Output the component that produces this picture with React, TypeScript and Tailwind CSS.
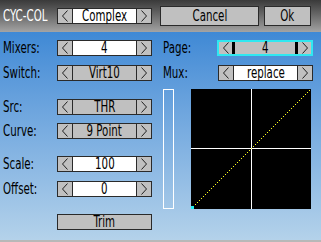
import React from 'react'
import clsx from 'clsx'

const font = { fontFamily: '"DejaVu Sans Condensed", "DejaVu Sans", sans-serif' }

// narrow bitmap-like text: condensed face squeezed horizontally
function Txt({ children, left }: { children: React.ReactNode; left?: boolean }) {
  return (
    <span className={clsx('inline-block whitespace-nowrap text-[15px] leading-none scale-x-[0.76]', left ? 'origin-left' : 'origin-center')}>
      {children}
    </span>
  )
}

function Chevron({ dir }: { dir: 'l' | 'r' }) {
  return (
    <svg width="8" height="12" viewBox="0 0 8 12" className="block">
      <polyline
        points={dir === 'l' ? '6.5,0.5 1.5,6 6.5,11.5' : '1.5,0.5 6.5,6 1.5,11.5'}
        fill="none"
        stroke="#202020"
        strokeWidth="1"
      />
    </svg>
  )
}

function Spinner({ value, gray, focus }: { value: string; gray?: boolean; focus?: boolean }) {
  if (focus) {
    return (
      <div className="flex h-4 w-[96px] border-2 border-[#30e8f0] bg-[#c0c0c0]">
        <div className="w-[13px] flex items-center justify-center"><Chevron dir="l" /></div>
        <div className="flex-1 border-x-[3px] border-black flex items-center justify-center"><Txt>{value}</Txt></div>
        <div className="w-[13px] flex items-center justify-center"><Chevron dir="r" /></div>
      </div>
    )
  }
  return (
    <div className="flex h-4 w-[95px]">
      <div className="w-[16px] border border-[#2a2a2a] bg-[#c0c0c0] flex items-center justify-center"><Chevron dir="l" /></div>
      <div className={clsx('flex-1 border-y border-[#2a2a2a] flex items-center justify-center', gray ? 'bg-[#c0c0c0]' : 'bg-white')}><Txt>{value}</Txt></div>
      <div className="w-[16px] border border-[#2a2a2a] bg-[#c0c0c0] flex items-center justify-center"><Chevron dir="r" /></div>
    </div>
  )
}

function Row({ label, children, className }: { label: string; children: React.ReactNode; className?: string }) {
  return (
    <div className={clsx('flex items-center h-4', className)}>
      <span className="w-[54px] text-black"><Txt left>{label}</Txt></span>
      {children}
    </div>
  )
}

// dotted yellow diagonal, every other pixel
const dots = Array.from({ length: 60 }, (_, i) => i * 2)

function Curve() {
  return (
    <svg width="120" height="120" viewBox="0 0 120 120" className="block" shapeRendering="crispEdges">
      <rect width="120" height="120" fill="#000" />
      <rect x="60" y="0" width="1" height="120" fill="#fff" />
      <rect x="0" y="59" width="120" height="1" fill="#fff" />
      {dots.map(d => (
        <rect key={d} x={d} y={119 - d} width="1" height="1" fill="#f4f41c" />
      ))}
      <rect x="0" y="117" width="3" height="3" fill="#20f0f0" />
    </svg>
  )
}

export default function App() {
  return (
    <div className="w-[321px] h-[242px] flex flex-col overflow-hidden" style={font}>
      {/* title bar */}
      <div className="h-8 flex items-center bg-gradient-to-b from-[#3a3a3a] to-[#a4a4a4] pl-[3px]">
        <span className="w-[54px] text-white"><Txt left>CYC-COL</Txt></span>
        <Spinner value="Complex" />
        <button className="ml-[8px] w-[99px] h-[20px] border border-[#2a2a2a] bg-[#c0c0c0] flex items-center justify-center"><Txt>Cancel</Txt></button>
        <button className="ml-[5px] w-[47px] h-[20px] border border-[#2a2a2a] bg-[#c0c0c0] flex items-center justify-center"><Txt>Ok</Txt></button>
      </div>

      <div className="flex-1 flex pt-2 pl-[3px] bg-gradient-to-b from-[#3f89d5] to-[#b4d2ea]">
        <div className="flex flex-col w-[149px]">
          <Row label="Mixers:"><Spinner value="4" /></Row>
          <Row label="Switch:" className="mt-[9px]"><Spinner value="Virt10" gray /></Row>
          <Row label="Src:" className="mt-[18px]"><Spinner value="THR" gray /></Row>
          <Row label="Curve:" className="mt-[8px]"><Spinner value="9 Point" gray /></Row>
          <Row label="Scale:" className="mt-[17px]"><Spinner value="100" /></Row>
          <Row label="Offset:" className="mt-[9px]"><Spinner value="0" /></Row>
          <div className="mt-[17px] ml-[54px] w-[95px] h-4 border border-[#2a2a2a] bg-[#c0c0c0] flex items-center justify-center"><Txt>Trim</Txt></div>
        </div>

        <div className="flex flex-col ml-[11px]">
          <Row label="Page:"><Spinner value="4" focus /></Row>
          <Row label="Mux:" className="mt-[9px]"><div className="ml-px"><Spinner value="replace" /></div></Row>
          <div className="flex mt-2">
            <div className="w-[11px] h-[120px] border border-white" />
            <div className="ml-[17px]"><Curve /></div>
          </div>
        </div>
      </div>
      <div className="h-[2px] bg-[#b8b8b8]" />
    </div>
  )
}
